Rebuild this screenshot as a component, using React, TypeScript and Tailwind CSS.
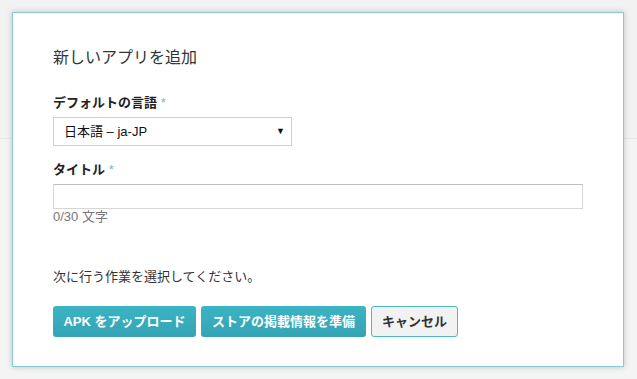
import React, { useState } from "react";

const font = "font-['Liberation_Sans','Noto_Sans_CJK_JP',sans-serif]";

const Label = ({ text }: { text: string }) => (
    <div className="text-[13px] leading-[18px] font-bold text-[#222]">
        {text} <span className="text-[#7fb3c0] font-normal">*</span>
    </div>
);

export default function App() {
    const [title, setTitle] = useState("");

    return (
        <div className={`${font} w-[637px] h-[379px] p-[12px] bg-[linear-gradient(to_bottom,#f2f2f2_138px,#e7e7e7_138px,#e7e7e7_139px,#f4f4f4_139px)]`}>
            <div className="w-[612px] h-[355px] bg-white border-[1.5px] border-[#86cad7] shadow-[0_0_6px_rgba(0,0,0,0.2)] pl-[40px] pt-[33px]">
                <h1 className="text-[16px] leading-6 text-[#333]">新しいアプリを追加</h1>

                <div className="mt-[24px]">
                    <Label text="デフォルトの言語" />
                </div>
                <div className="mt-[5px] w-[239px] h-[29px] border border-[#d0d0d0] flex items-center justify-between pl-[10px] pr-[6px] text-[13px] text-[#111]">
                    <span>日本語 – ja-JP</span>
                    <span className="text-[9px]">▼</span>
                </div>

                <div className="mt-[15px]">
                    <Label text="タイトル" />
                </div>
                <input
                    value={title}
                    onChange={(e) => setTitle(e.target.value)}
                    className="mt-[5px] block w-[530px] h-[25px] border border-[#d6d6d6] border-t-[#bdbdbd] px-2 text-[13px] outline-none"
                />
                <div className="text-[13px] leading-4 text-[#777]">{title.length}/30 文字</div>

                <div className="mt-[43px] text-[13px] leading-[18px] text-[#333]">次に行う作業を選択してください。</div>

                <div className="mt-[20px] flex gap-[5px]">
                    <button className="w-[143px] h-[31px] rounded-[3px] bg-[linear-gradient(to_bottom,#3bb4c4,#34a4b4)] text-white text-[13px] font-bold">
                        APK をアップロード
                    </button>
                    <button className="w-[165px] h-[31px] rounded-[3px] bg-[linear-gradient(to_bottom,#3bb4c4,#34a4b4)] text-white text-[13px] font-bold">
                        ストアの掲載情報を準備
                    </button>
                    <button className="w-[87px] h-[31px] rounded-[3px] bg-[#f2f2f2] border border-[#4bb9c9] text-[#333] text-[13px] font-bold">
                        キャンセル
                    </button>
                </div>
            </div>
        </div>
    );
}
